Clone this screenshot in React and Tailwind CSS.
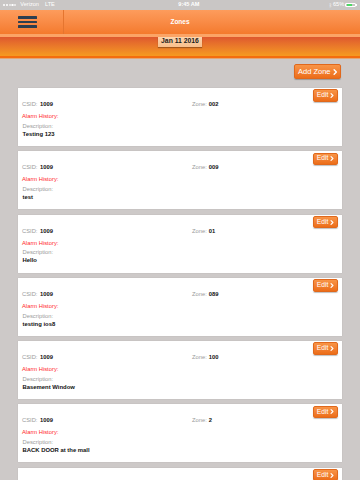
import React from "react";

const zones = [
  { zone: "002", desc: "Testing 123" },
  { zone: "009", desc: "test" },
  { zone: "01", desc: "Hello" },
  { zone: "089", desc: "testing ios8" },
  { zone: "100", desc: "Basement Window" },
  { zone: "2", desc: "BACK DOOR at the mall" },
  { zone: null, desc: null },
];

function Chevron({ className }) {
  return (
    <svg viewBox="0 0 6 8" className={className} fill="none">
      <path d="M1.5 1 L4.5 4 L1.5 7" stroke="white" strokeWidth="1.8" strokeLinecap="round" strokeLinejoin="round" />
    </svg>
  );
}

function OrangeButton({ label, className, textClass, chevClass }) {
  return (
    <div
      className={`flex items-center justify-center gap-[2px] rounded-[2px] border border-[#e0681c] bg-gradient-to-b from-[#f89446] to-[#ec6d17] shadow-[0_1px_1px_rgba(0,0,0,0.25)] ${className}`}
    >
      <span className={`text-white leading-none ${textClass}`}>{label}</span>
      <Chevron className={chevClass} />
    </div>
  );
}

function Card({ zone, desc }) {
  return (
    <div className="relative h-[58px] shrink-0 bg-white shadow-[0_0_1px_rgba(0,0,0,0.15)] px-[4px] pt-[12px] text-[5.8px]">
      <OrangeButton
        label="Edit"
        className="absolute top-[1.3px] right-[4px] w-[25px] h-[12.4px]"
        textClass="text-[6.7px]"
        chevClass="w-[4px] h-[5px]"
      />
      {zone !== null && (
        <>
          <div className="flex leading-[8px] h-[8px]">
            <div className="w-[170px] flex">
              <span className="text-[#9a9a9a] w-[18px]">CSID:</span>
              <span className="font-bold text-[#111]">1009</span>
            </div>
            <div className="flex gap-[2px]">
              <span className="text-[#9a9a9a]">Zone:</span>
              <span className="font-bold text-[#111]">{zone}</span>
            </div>
          </div>
          <div className="mt-[4px] leading-[8px] h-[8px] text-[#ff1f2a]">Alarm History:</div>
          <div className="mt-[1.7px] leading-[8px] h-[8px] text-[#9a9a9a] pl-[0.5px]">Description:</div>
          <div className="leading-[8px] h-[8px] font-bold text-[#111] text-[5.9px] pl-[0.5px]">{desc}</div>
        </>
      )}
    </div>
  );
}

export default function App() {
  return (
    <div className="w-[360px] h-[480px] overflow-hidden bg-[#cdc9c8] font-['Liberation_Sans',Arial,sans-serif]">
      {/* status bar */}
      <div className="relative h-[10px] bg-[#c9c6c5] flex items-center px-[3px] text-[5.6px] text-white leading-none">
        <div className="flex items-center gap-[4px]">
          <div className="flex items-center gap-[0.6px]">
            <span className="w-[2.2px] h-[2.2px] rounded-full bg-white" />
            <span className="w-[2.2px] h-[2.2px] rounded-full bg-white" />
            <span className="w-[2.2px] h-[2.2px] rounded-full border-[0.5px] border-white" />
            <span className="w-[2.2px] h-[2.2px] rounded-full border-[0.5px] border-white" />
            <span className="w-[2.2px] h-[2.2px] rounded-full border-[0.5px] border-white" />
          </div>
          <span>Verizon</span>
          <span className="ml-[2px]">LTE</span>
        </div>
        <div className="flex-1 text-center font-bold pr-[10px] pl-[4px]">9:45 AM</div>
        <div className="flex items-center gap-[1px]">
          <span className="text-[5px]">ᛒ</span>
          <span>65%</span>
          <div className="flex items-center">
            <div className="w-[11px] h-[4.5px] border-[0.6px] border-white rounded-[1px] p-[0.6px]">
              <div className="w-[65%] h-full bg-[#4cd964]" />
            </div>
            <div className="w-[0.8px] h-[2px] bg-white" />
          </div>
        </div>
      </div>
      {/* nav bar */}
      <div className="h-[24px] bg-gradient-to-b from-[#fd9c5c] to-[#f47a2c] flex items-center">
        <div className="w-[64px] h-full flex items-center pl-[18px] border-r border-[#e5752f]">
          <div className="flex flex-col gap-[2px] w-[18.5px]">
            <div className="h-[2.6px] bg-[#2d3e50] rounded-[0.5px]" />
            <div className="h-[2.6px] bg-[#2d3e50] rounded-[0.5px]" />
            <div className="h-[2.6px] bg-[#2d3e50] rounded-[0.5px]" />
          </div>
        </div>
        <div className="flex-1 text-center text-white font-bold text-[6.5px] pr-[64px] pb-[0.5px]">Zones</div>
      </div>
      <div className="h-[3px] bg-[#fba466]" />
      {/* date band */}
      <div className="h-[19px] bg-gradient-to-b from-[#de582e] to-[#f59a20] flex justify-center items-start">
        <div className="w-[44px] h-[10px] -mt-[0.5px] bg-gradient-to-b from-[#fcd4ac] to-[#f9bf8c] shadow-[0_1px_1px_rgba(0,0,0,0.3)] flex items-center justify-center font-bold text-[6.8px] text-[#1c1c1c] leading-none">
          Jan 11 2016
        </div>
      </div>
      <div className="h-[2px] bg-[#f46d0f]" />
      <div className="h-[1px] bg-[#e3a675]" />
      {/* content */}
      <div className="px-[18px] pt-[5px]">
        <div className="flex justify-end pr-[1px]">
          <OrangeButton
            label="Add Zone"
            className="w-[47px] h-[15px]"
            textClass="text-[7.5px]"
            chevClass="w-[4.5px] h-[6px]"
          />
        </div>
        <div className="mt-[9px] flex flex-col gap-[5.3px]">
          {zones.map((z, i) => (
            <Card key={i} zone={z.zone} desc={z.desc} />
          ))}
        </div>
      </div>
    </div>
  );
}
